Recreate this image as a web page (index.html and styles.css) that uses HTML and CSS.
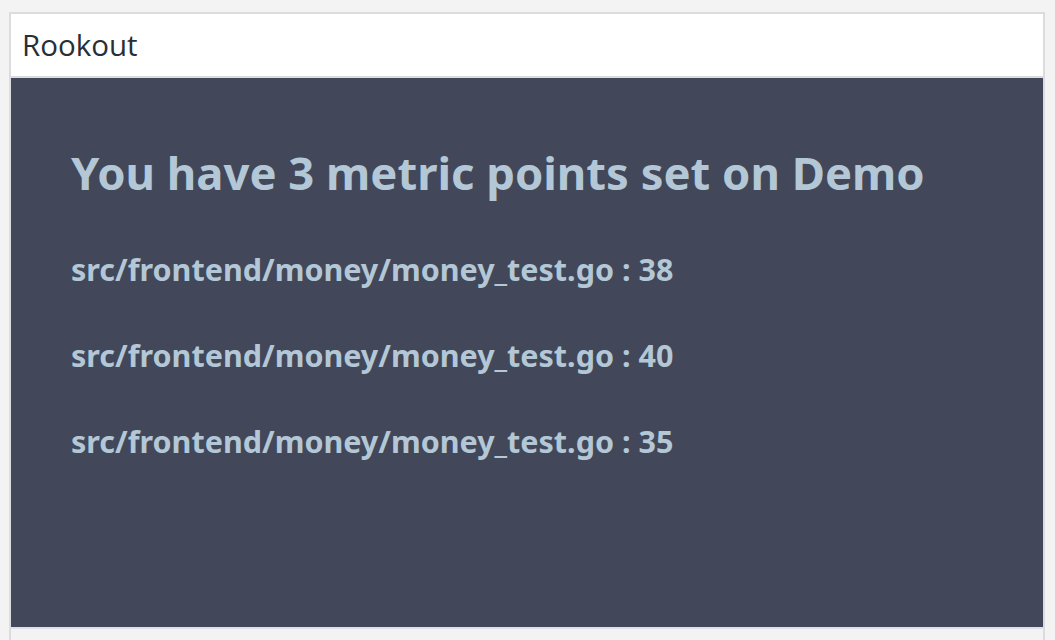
FILE: index.html
```html
<!DOCTYPE html>
<html>
<head>
<meta charset="utf-8">
<link rel="stylesheet" href="styles.css">
</head>
<body>
<div class="panel">
  <div class="header">Rookout</div>
  <div class="content">
    <h1 class="title">You have 3 metric points set on Demo</h1>
    <div class="point">src/frontend/money/money_test.go : 38</div>
    <div class="point">src/frontend/money/money_test.go : 40</div>
    <div class="point">src/frontend/money/money_test.go : 35</div>
  </div>
</div>
</body>
</html>
```
FILE: styles.css
```css
html, body {
  margin: 0;
  padding: 0;
  background: #f3f3f3;
  height: 100%;
  overflow: hidden;
}
.panel {
  margin: 12px 10px 0 9px;
  border: 2px solid #dcdbe0;
  border-bottom: none;
  height: 626px;
  box-sizing: content-box;
  background: #f3f3f3;
}
.header {
  background: #fff;
  border-bottom: 2px solid #dcdbe0;
  box-sizing: border-box;
  height: 64px;
  padding-left: 11px;
  font-family: "Open Sans", sans-serif;
  font-size: 29.5px;
  line-height: 62px;
  color: #2a2e36;
}
.content {
  background: #424859;
  border-bottom: 2px solid #e1e0e6;
  padding: 58px 0 0 60px;
  box-sizing: border-box;
  height: 551px;
  font-family: "Noto Sans", sans-serif;
  color: #b3c7d6;
}
.title {
  margin: 0 0 -6px;
  font-size: 45.4px;
  font-weight: 700;
  line-height: 72px;
}
.point {
  font-size: 30.5px;
  font-weight: 700;
  margin-top: 48px;
  line-height: 38px;
}
```
